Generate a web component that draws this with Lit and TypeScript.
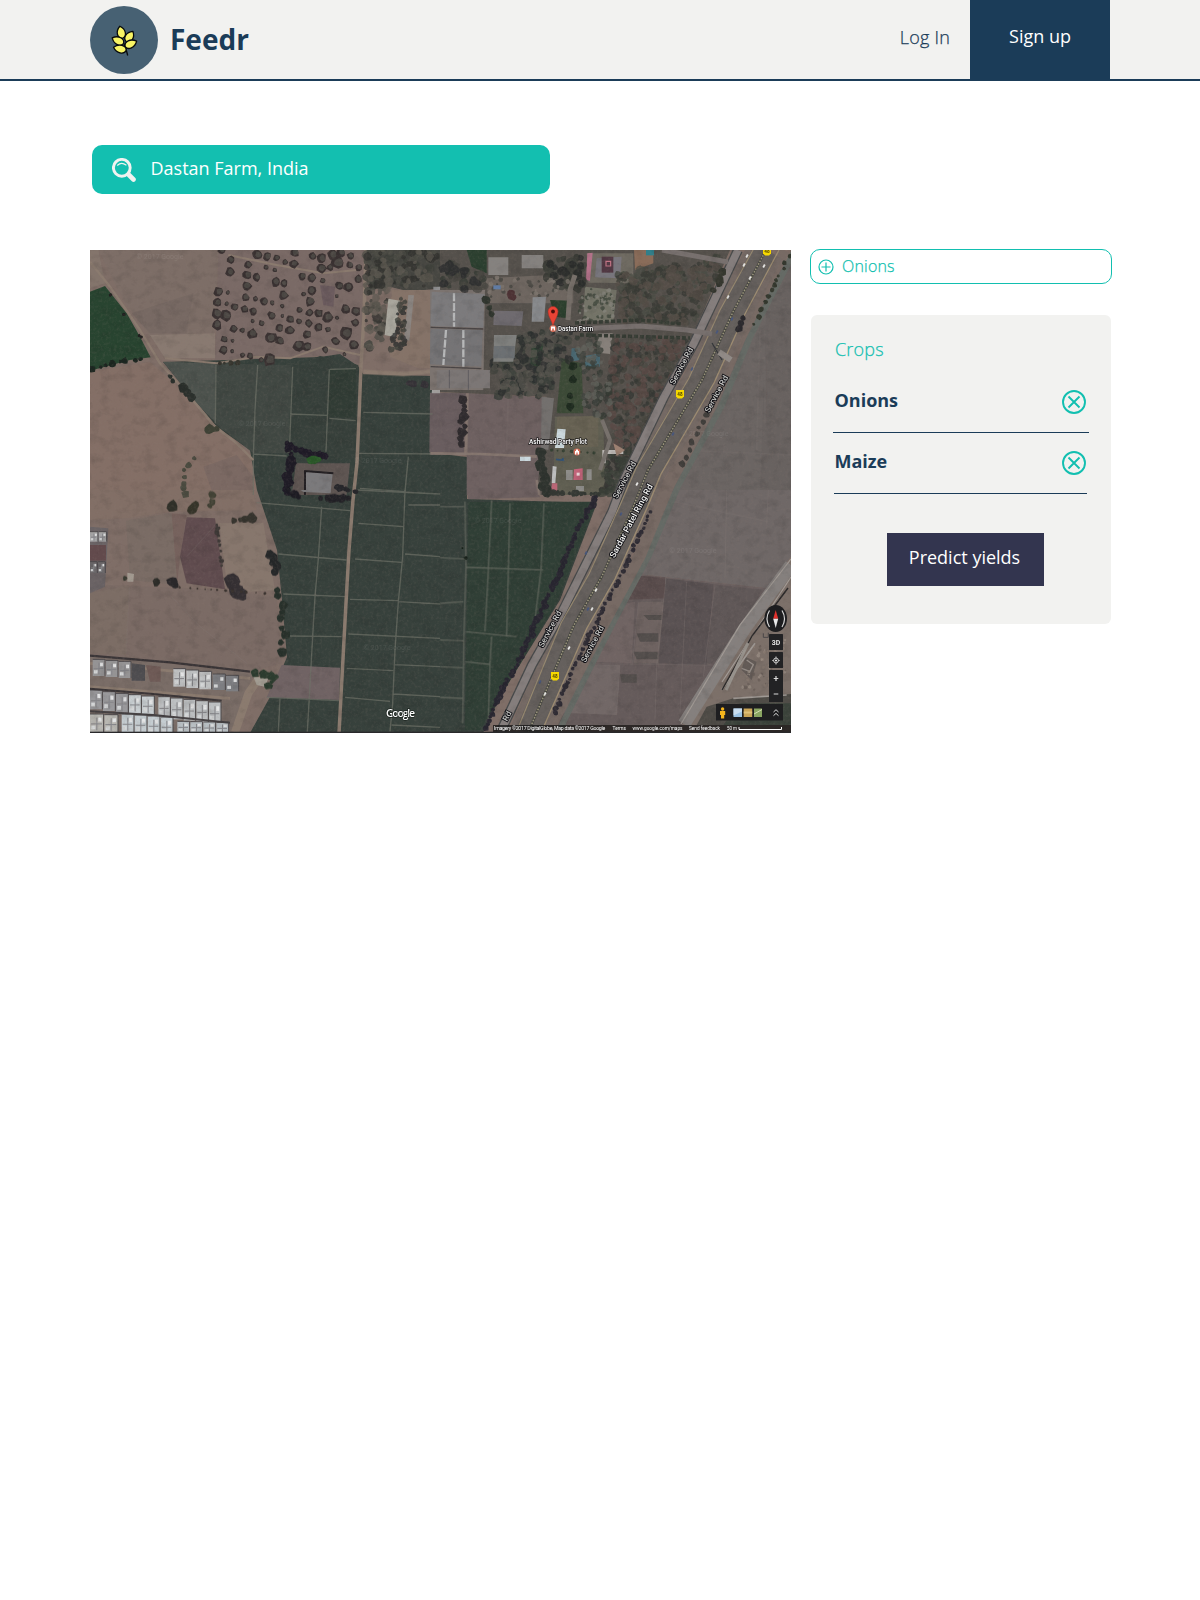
import { LitElement, html, css, svg } from "lit";
import { customElement, property, state } from "lit/decorators.js";

type Pt = [number, number];

/** Small seeded generator, so that the scattered vegetation is stable. */
function seeded(seed: number) {
  let s = seed >>> 0;
  return () => {
    s = (s + 0x6d2b79f5) >>> 0;
    let t = s;
    t = Math.imul(t ^ (t >>> 15), t | 1);
    t ^= t + Math.imul(t ^ (t >>> 7), t | 61);
    return ((t ^ (t >>> 14)) >>> 0) / 4294967296;
  };
}

function inside([x, y]: Pt, poly: Pt[]) {
  let hit = false;
  for (let i = 0, j = poly.length - 1; i < poly.length; j = i++) {
    const [xi, yi] = poly[i];
    const [xj, yj] = poly[j];
    if (yi > y !== yj > y && x < ((xj - xi) * (y - yi)) / (yj - yi) + xi) hit = !hit;
  }
  return hit;
}

/** An irregular round blob: one tree crown. */
function blob(x: number, y: number, r: number, rnd: () => number) {
  const n = 9;
  let d = "";
  for (let i = 0; i < n; i++) {
    const a = (i / n) * Math.PI * 2;
    const k = r * (0.78 + rnd() * 0.4);
    d += `${i ? "L" : "M"}${(x + Math.cos(a) * k).toFixed(1)} ${(y + Math.sin(a) * k).toFixed(1)}`;
  }
  return d + "Z";
}

function wood(poly: Pt[], count: number, rMin: number, rMax: number, colors: string[], seed: number) {
  const rnd = seeded(seed);
  const xs = poly.map((p) => p[0]);
  const ys = poly.map((p) => p[1]);
  const x0 = Math.min(...xs), x1 = Math.max(...xs);
  const y0 = Math.min(...ys), y1 = Math.max(...ys);
  const out = colors.map(() => "");
  let placed = 0;
  let guard = 0;
  while (placed < count && guard++ < count * 12) {
    const p: Pt = [x0 + rnd() * (x1 - x0), y0 + rnd() * (y1 - y0)];
    if (!inside(p, poly)) continue;
    out[Math.floor(rnd() * colors.length)] += blob(p[0], p[1], rMin + rnd() * (rMax - rMin), rnd);
    placed++;
  }
  return out.map((d, i) => svg`<path d=${d} fill=${colors[i]} opacity="0.75"/>`);
}

function treeLine(line: Pt[], step: number, r: number, color: string, seed: number) {
  const rnd = seeded(seed);
  let d = "";
  for (let i = 1; i < line.length; i++) {
    const [ax, ay] = line[i - 1];
    const [bx, by] = line[i];
    const len = Math.hypot(bx - ax, by - ay);
    for (let t = 0; t < len; t += step * (0.7 + rnd() * 0.7)) {
      const k = t / len;
      d += blob(ax + (bx - ax) * k + (rnd() - 0.5) * r, ay + (by - ay) * k, r * (0.55 + rnd() * 0.65), rnd);
    }
  }
  return svg`<path d=${d} fill=${color}/>`;
}

const orchard: [number, number, number][] = [
  [395, 0, 12], [422, 30, 12], [420, 66, 14], [475, 44, 12], [502, 15, 15], [531, 20, 13], [560, 24, 10], [472, 75, 14],
  [501, 82, 12], [528, 52, 8], [555, 60, 7], [585, 36, 9], [612, 42, 13], [614, 8, 14], [470, 108, 15], [466, 142, 12],
  [385, 125, 15], [382, 158, 13], [380, 192, 17], [407, 198, 18], [380, 225, 16], [434, 172, 12], [463, 177, 12], [490, 184, 12],
  [496, 146, 8], [523, 155, 13], [546, 158, 8], [557, 96, 14], [581, 100, 12], [580, 137, 15], [576, 168, 7], [637, 79, 12],
  [665, 83, 15], [694, 56, 15], [695, 25, 15], [668, 19, 12], [727, 15, 16], [753, 8, 14], [781, 18, 11], [780, 45, 11], [806, 52, 11],
  [698, 92, 9], [664, 122, 14], [641, 132, 8], [660, 155, 15], [658, 188, 12], [686, 190, 13], [714, 202, 16], [655, 220, 12],
  [686, 232, 12], [714, 238, 9], [627, 214, 9], [601, 208, 12], [599, 241, 14], [568, 235, 12], [545, 197, 13], [515, 220, 10],
  [487, 251, 15], [457, 241, 8], [431, 236, 12], [402, 268, 11], [428, 272, 6], [400, 300, 13], [542, 264, 18], [570, 273, 13],
  [625, 286, 17], [652, 253, 13], [651, 291, 14], [706, 300, 10], [736, 274, 13], [769, 250, 20], [790, 285, 15], [795, 218, 12],
  [767, 176, 14], [797, 184, 14], [748, 108, 13], [774, 112, 14], [804, 87, 13], [480, 318, 10], [458, 315, 8], [427, 304, 6],
  [538, 330, 19], [513, 330, 8], [763, 313, 6], [741, 204, 6], [488, 213, 6], [410, 161, 7], [413, 128, 7], [577, 198, 6],
  [742, 38, 20], [720, 52, 10], [740, 138, 6], [628, 180, 9],
];

const orchardPaths = (() => {
  const rnd = seeded(11);
  let lo = "";
  let hi = "";
  for (const [x, y, r] of orchard) {
    lo += blob(x, y, r, rnd);
    hi += blob(x + r * 0.15, y - r * 0.1, r * 0.62, rnd);
  }
  return svg`<path d=${lo} fill="#3a3232"/><path d=${hi} fill="#4d4945"/>`;
})();

function house(x: number, y: number, w: number, h: number, tone: string) {
  return svg`<g>
    <rect x=${x} y=${y} width=${w} height=${h} fill=${tone}/>
    <path d=${`M${x} ${y}h${w}M${x + w} ${y}v${h}`} stroke="#4b484a" stroke-width="3"/>
    <path d=${`M${x + 3} ${y + h * 0.55}h${w - 8}M${x + w * 0.5} ${y + h * 0.2}v${h * 0.7}`} stroke="#86868a" stroke-width="3"/>
    <rect x=${x + w * 0.6} y=${y + h * 0.2} width=${w * 0.25} height=${h * 0.22} fill="#e4e5e6"/>
    <rect x=${x + w * 0.1} y=${y + h * 0.65} width=${w * 0.3} height=${h * 0.2} fill="#d4d6d7"/>
  </g>`;
}

const A = "translate(90 250) scale(.33333)";
const B = "translate(440 250) scale(.33333)";
const C = "translate(90 490) scale(.33333)";
const D = "translate(440 490) scale(.33333)";

@customElement("farm-map")
export class FarmMap extends LitElement {
  static styles = css`
    :host { display: block; width: 701px; height: 483px; }
    .map { display: block; width: 701px; height: 483px; }
    .road-label, .place, .brand, .legal, .control {
      font-family: Roboto, "Open Sans", sans-serif;
      fill: #fff;
    }
    .road-label { font-size: 8px; text-anchor: middle; fill: #c6c6c3; stroke: #111116; stroke-width: 1.8px; paint-order: stroke; font-weight: 500; }
    .ring { fill: #f4f4f2; font-size: 8.5px; }
    .place { font-size: 6.6px; font-weight: 500; stroke: #1d1c1c; stroke-width: 1.3px; paint-order: stroke; }
    .brand { font-size: 10.5px; font-weight: 600; stroke: #1c241f; stroke-width: 1.5px; paint-order: stroke; font-family: "Open Sans", sans-serif; }
    .legal { font-size: 5.6px; }
    .tight { letter-spacing: -0.3px; }
    .control { font-size: 7px; font-weight: 700; text-anchor: middle; fill: #e6e6e6; }
    .mark { font-family: Roboto, sans-serif; font-size: 7px; text-anchor: middle; fill: #fff; opacity: 0.08; }
    .shield { font-family: Roboto, sans-serif; font-size: 4.6px; text-anchor: middle; fill: #4b3f00; font-weight: 700; }
  `;

  private land() {
    return svg`
      <rect x="90" y="250" width="701" height="483" fill="#7f6e67"/>
      <g transform=${A}>
        <path d="M25 0H385L370 320L230 325L100 150Z" fill="#7d6e67"/>
        <path d="M125 190L310 130L290 250L180 250Z" fill="#776963"/>
        <path d="M0 0L25 0L45 100L0 115Z" fill="#84756c"/>
        <path d="M180 255L375 250V325L225 325Z" fill="#897a71"/>
        <path d="M0 125L45 108L110 190L150 260L182 322L120 330L0 362Z" fill="#284430"/>
        <path d="M0 365L180 336L310 450L490 620L500 735H0Z" fill="#846f66"/>
        <path d="M385 0H822L812 345L690 318L375 330Z" fill="#7a6a66"/>
        <path d="M690 105L735 110L730 170L700 165Z" fill="#6b5b5e"/>
        <path d="M340 650L440 615L490 680V735H370Z" fill="#7b6963"/>
      </g>
      <polygon fill="#37413c" points="163,362 320,357 340,354 358,366 363,374 433,376 433,453 467,457 467,499 597,503 560,600 500,697 483,733 250,733 270,697 287,657 282,600 277,550 257,490 250,450 217,427"/>
      <g transform=${A}>
        <path d="M220 335L378 340L375 515L310 450Z" fill="#4d534e"/>
        <path d="M378 340L605 345L600 610L490 610L375 520Z" fill="#414843"/>
        <path d="M605 350L690 318L805 345L800 630L595 610Z" fill="#37403b"/>
        <path d="M720 358H797V505L715 500Z" fill="#313c35"/>
      </g>
      <g transform=${B}>
        <path d="M-30 428L78 430L72 610L-32 606Z" fill="#695d5f"/>
        <path d="M87 430L318 442L300 735H80V430Z" fill="#6e6161"/>
        <path d="M60 0H870L700 390L560 690L500 735H290L320 440L-20 425V0Z" fill="#55514c"/>
        <path d="M1053 30L990 100L900 280L700 700V735H1053Z" fill="#6b6563"/>
        <path d="M1020 60L1053 50V735H960L980 150Z" fill="#686260"/>
      </g>
      <g transform=${D}>
        <path d="M80 -5L290 -5L300 22L85 28Z" fill="#6d6060"/>
        <path d="M85 35H470L350 340L180 620L120 720H75Z" fill="#303f36"/>
        <path d="M680 0H1053V200L980 295L570 250Z" fill="#6f6867"/>
        <path d="M570 250L980 295L730 705H340L480 400Z" fill="#655b5b"/>
        <path d="M560 255L675 262V325L540 330Z" fill="#5a4d4d"/>
        <path d="M490 350L585 335L575 520L440 515Z" fill="#706463"/>
        <path d="M595 335H670V430L655 520H582Z" fill="#6e6361"/>
        <path d="M610 375H665V390H625ZM590 430H655V455H600ZM580 485H655V508H590ZM540 553H590V578H545Z" fill="#534e4c"/>
        <path d="M678 265L820 282L800 525L655 520Z" fill="#5a5253"/>
        <path d="M823 285L965 300L860 500L800 525Z" fill="#605858"/>
        <path d="M430 522L540 525L530 675L360 668Z" fill="#726867"/>
        <path d="M1053 200V640H880L800 705H725Z" fill="#7c7069"/>
        <path d="M800 650L880 625L1053 612V705H770Z" fill="#4f4c47"/>
        <path d="M900 640H1053V705H850Z" fill="#3b433b"/>
      </g>
      <g transform=${C}>
        <path d="M0 0H490L500 60L240 65L110 85L0 90Z" fill="#826f66"/>
        <path d="M108 92L245 68L262 285L120 270Z" fill="#7a6c65"/>
        <path d="M245 70L290 75L270 200L262 280Z" fill="#76625d"/>
        <path d="M290 82L375 85L405 298L290 280L270 200Z" fill="#604c4f"/>
        <path d="M388 100L520 98L555 300L470 305L412 295Z" fill="#87776d"/>
        <path d="M55 285L380 298L560 320L575 520L485 545L0 495V310Z" fill="#7b6b65"/>
        <path d="M0 310L118 285L108 495L0 490Z" fill="#7c6d65"/>
        <path d="M0 495L490 550L430 729H0Z" fill="#7a6d67"/>
        <path d="M575 525L750 533L748 630L530 622Z" fill="#706364"/>
        <path d="M0 110L55 115L45 290L0 310Z" fill="#6a6365"/>
      </g>`;
  }

  private fieldLines() {
    return svg`
      <g fill="none" stroke="#6f7268" stroke-width="4" opacity="0.7">
        <path transform=${A} d="M378 345L376 520M503 345L495 480L490 620V735M608 350L598 610M718 358L708 605M600 492L712 496M720 358L798 356M718 505L797 512M490 612L590 618M820 487L1028 492M805 610L1050 612M955 620L945 725M810 715L945 725"/>
        <path transform=${C} d="M695 50L685 205L675 320L668 440L658 620L652 725M500 38L780 62M565 192L770 210M580 312L768 320M600 438L755 440M570 625L565 725M530 622L748 632M945 0L938 200L925 335L915 480L908 640L900 725M805 100L940 110M795 207L935 217M780 328L925 332M775 432L1050 445M770 535L910 542M765 622L900 634M955 45H1050M945 192L1050 200M925 335L1050 342M915 524L1050 530M910 612L1050 620M905 705L1050 712M800 0L1050 12"/>
        <path transform=${D} d="M75 35L78 230L72 430L68 700M155 30L145 240L135 425M210 40L205 240L200 440M312 40L303 240L285 390M80 232L310 240M78 425L230 440M155 440L150 520L145 700M75 515L150 523M0 50H72M0 203L72 207M0 340L70 335M0 450L70 452M0 530L68 533M0 622L68 625"/>
      </g>
      <g fill="none" stroke="#8a7f7b" stroke-width="2" opacity="0.4">
        <path transform=${B} d="M960 245L950 600M710 600L1053 615M205 435L200 600M975 320V520"/>
        <path transform=${D} d="M860 0L855 265M985 0L980 100M680 30L985 95M678 265L650 525M740 275L720 670M825 285L790 560M560 250L980 297M430 520L860 525M595 335L578 520M540 525L530 675M650 525L645 690"/>
        <path transform=${C} d="M235 310L330 410L470 520M118 290L108 490M380 100L290 200"/>
      </g>
      <g fill="none" stroke="#8b7b6f" stroke-linejoin="round">
        <path stroke-width="3.500" d="M366 250L364 317L361 365L359 417L357 463L353 500L349 550L346 603L342 677L339 733"/>
        <path transform=${A} stroke-width="7" d="M0 35L60 110L150 240L210 340L300 440L370 525L440 580L490 630"/>
        <path transform=${A} stroke-width="6" d="M225 325L380 340L500 320L600 325L700 290L810 315M415 15L560 45L700 70L800 60"/>
        <path transform=${A} stroke-width="13" d="M820 365L940 372L1050 362"/>
        <path transform=${B} stroke-width="8" stroke="#867770" d="M-30 610L120 612L290 620M290 690L298 735M82 430L78 610"/>
        <path transform=${C} stroke-width="24" d="M435 727L475 610L510 560"/>
        <path transform=${C} stroke-width="8" d="M0 520L480 565M0 590L420 625"/>
      </g>`;
  }

  private buildings() {
    const row = (x: number, y: number, n: number, w: number, h: number, tone: string, dy = 0) =>
      Array.from({ length: n }, (_, i) => house(x + i * w, y + i * dy, w - 2, h, tone));
    return svg`
      <g transform=${A}>
        <path d="M830 0H1050V115L960 125L900 110L840 120Z" fill="#474742"/>
        <path d="M905 120H1050V355H985L900 320Z" fill="#857368"/>
        <path d="M1030 110H1050V360H1022Z" fill="#8f8f90"/>
        <path d="M618 640L780 640L770 735H605Z" fill="#5e5552"/>
        <path d="M648 665L728 672L722 725H645Z" fill="#7b7a7c"/>
        <path d="M645 735V663L730 670" fill="none" stroke="#221f22" stroke-width="6"/>
        <path d="M1030 380H1050V430H1025Z" fill="#a2a09e"/>
      </g>
      <g transform=${C}>
        <path d="M632 0H722V10L640 6Z" fill="#7b7a7c"/>
      </g>
      <g transform=${B}>
        <path d="M-30 120H135L130 420H-30Z" fill="#7c7470"/>
        <path d="M-25 125L134 132L130 233L-28 228Z" fill="#7c7b7d"/>
        <path d="M-28 236L128 240L124 350L-30 343Z" fill="#757476"/>
        <path d="M-28 232L130 237M-28 350L124 356" stroke="#4a4545" stroke-width="4"/>
        <path d="M-10 360H150V415H-10Z" fill="#7c7776"/>
        <path d="M42 130V230M70 240V350M18 240L10 345" stroke="#b7b8b9" stroke-width="7" stroke-dasharray="24 5"/>
        <path d="M85 360V420M28 360V415" stroke="#5e5c5f" stroke-width="3"/>
        <path d="M80 0H140V70L95 50Z" fill="#2c4030"/>
        <path d="M145 22H205V75H145Z M245 15H310V55H245Z" fill="#85827f"/>
        <path d="M135 85L330 75L400 115V160H150Z" fill="#6e6660"/>
        <path d="M162 182L250 184L245 228L160 225Z" fill="#6f6b70"/>
        <path d="M330 150L392 152L385 205L345 200Z" fill="#2b3f2d"/>
        <path d="M275 290L310 280L300 350L270 345Z" fill="#2c4231"/>
        <path d="M440 10H580V100L445 98Z" fill="#6f6b62"/>
        <path d="M442 10L458 8L450 92L438 90Z" fill="#b4728a"/>
        <path d="M470 25L545 20L540 85L465 82Z" fill="#78767d"/>
        <path d="M485 20H520V68H485Z" fill="#513843"/>
        <path d="M498 34H512V48H498Z" fill="none" stroke="#c47586" stroke-width="3.500"/>
        <path d="M582 0H640V40L585 60Z" fill="#8a6c59"/>
        <path d="M618 0H642V16H618Z" fill="#307f8b"/>
        <path d="M435 110L530 120L520 215L430 210Z" fill="#747468"/>
        <path d="M475 250H518L510 312L470 308Z" fill="#87817b"/>
        <path d="M435 318L480 310V350H435ZM395 295H420V330L392 335Z" fill="#4b6a74"/>
        <path d="M365 325L425 340L430 490L350 490Z" fill="#3c4a37"/>
        <path d="M305 440L342 445L325 600L303 595Z" fill="#73706e"/>
        <path d="M345 500H490L495 735H340Z" fill="#605f52"/>
        <path d="M352 500L475 498V590L345 595Z" fill="#686354"/>
        <path d="M352 536L377 538L372 594H345Z" fill="#ccd9dd"/>
        <path d="M240 620H272V633H240Z" fill="#cbd9df"/>
        <path d="M338 648L350 650L346 700H335Z" fill="#bfc0c0"/>
        <path d="M336 700H352V728H332Z" fill="#ba6676"/>
        <path d="M378 660H398V690H378ZM440 658H455V690H440ZM408 708H432V724H408Z" fill="#8f8e8b"/>
        <path d="M402 658L428 655V690H400Z" fill="#c4637a"/>
        <rect x="410" y="668" width="9" height="9" fill="#efd9dd"/>
        <path d="M348 628L370 631L368 624" stroke="#33577d" stroke-width="5" fill="none"/>
      </g>
      <g transform=${C}>
        ${row(0, 125, 2, 26, 30, "#a6a6a7")}
        ${row(0, 215, 2, 24, 34, "#6a6769")}
        <path d="M0 165H48V212H0Z" fill="#624a4c"/>
        ${row(8, 508, 3, 39, 50, "#959495", 3)}
        <path d="M125 520L165 525V572H125Z" fill="#4e4d50"/>
        <path d="M168 525L212 530V575H180Z" fill="#6e5a56"/>
        ${row(250, 536, 3, 39, 54, "#bfc1c2", 4)}
        ${row(368, 552, 2, 40, 48, "#7d7e82", 4)}
        ${row(0, 600, 3, 39, 58, "#99999c", 5)}
        ${row(117, 614, 2, 39, 56, "#c8ced1", 4)}
        ${row(205, 620, 5, 38, 64, "#bdc0c2", 4)}
        ${row(0, 672, 2, 43, 54, "#b8b7b2", 2)}
        ${row(95, 672, 4, 39, 56, "#c5cdd1", 3)}
        ${row(262, 694, 4, 39, 33, "#b8bfc3", 1)}
        <path d="M0 497L240 517L480 545" stroke="#3a3537" stroke-width="7" fill="none"/>
        <path d="M0 596L190 612L395 632" stroke="#3a3537" stroke-width="6" fill="none"/>
        <path d="M0 664L190 675L420 698" stroke="#454143" stroke-width="6" fill="none"/>
        <path d="M112 248L132 252L130 275H112Z" fill="#a29a90"/>
        <path d="M490 560L535 565L525 590L500 585Z" fill="#a39d93"/>
      </g>
      <g transform=${D}>
        <path d="M915 500L950 515L935 570L905 540Z" fill="#625a56"/>
        <path d="M920 510l20 14l-12 24M905 535l26 10" stroke="#958d87" stroke-width="4" fill="none"/>
        <path d="M845 600L945 460M880 625L1040 615M1010 560V630" stroke="#a09a95" stroke-width="5" fill="none"/>
        <path d="M970 430V442H985V428" stroke="#4a4648" stroke-width="3" fill="none"/>
        ${wood([[940, 470], [1040, 440], [1040, 600], [890, 600]], 60, 2, 6, ["#8b7c73", "#665b56", "#9a8d84"], 70)}
      </g>`;
  }

  private woods() {
    return svg`
      <g transform=${A}>${orchardPaths}
        ${wood([[830, 0], [1050, 0], [1010, 110], [900, 110], [885, 260], [835, 300], [820, 180]], 190, 5, 15, ["#3c3f39", "#4e4e47", "#30302e", "#5d5a52"], 3)}
        <path d="M895 146L930 152L915 262L884 255Z" fill="#a9a79e"/>
        <path d="M955 135L972 136L958 272L942 268Z" fill="#8c8682"/>
        ${wood([[925, 150], [948, 130], [945, 290], [895, 310], [912, 240]], 40, 5, 10, ["#26282a", "#3b3e38"], 4)}
        ${treeLine([[5, 358], [90, 335], [175, 325]], 22, 10, "#1c2620", 5)}
        ${treeLine([[240, 380], [295, 430], [325, 455]], 20, 13, "#2b302c", 6)}
        ${treeLine([[598, 580], [600, 640], [592, 735]], 11, 14, "#1f1c26", 7)}
        ${treeLine([[600, 590], [650, 610], [715, 620]], 12, 12, "#1f1b27", 8)}
        ${treeLine([[665, 630], [695, 628]], 8, 11, "#2b5a29", 9)}
        ${treeLine([[355, 538], [390, 536]], 15, 13, "#3f4236", 10)}
        ${treeLine([[315, 625], [285, 660], [285, 735]], 20, 11, "#4b4b40", 12)}
        ${treeLine([[390, 340], [450, 338]], 15, 8, "#37362f", 14)}
        ${treeLine([[745, 710], [795, 725]], 14, 12, "#27272b", 15)}
        ${treeLine([[955, 400], [1010, 405]], 25, 14, "#353237", 16)}
        ${treeLine([[60, 135], [155, 262], [195, 305]], 80, 8, "#1f1f1e", 17)}
      </g>
      <g transform=${B}>
        ${wood([[0, 20], [70, 60], [140, 70], [135, 120], [10, 115]], 50, 8, 15, ["#353b34", "#474640", "#292b2c"], 20)}
        ${wood([[310, 50], [420, 0], [440, 100], [400, 130], [330, 100]], 55, 8, 16, ["#32342f", "#3d403a", "#282a2a"], 21)}
        ${wood([[530, 75], [650, 50], [850, 20], [830, 80], [760, 220], [540, 215]], 330, 5, 14, ["#40443b", "#4a4c44", "#383934", "#564e47"], 22)}
        ${wood([[520, 265], [750, 262], [700, 380], [610, 590], [540, 640], [500, 470]], 400, 5, 13, ["#40403a", "#4b4a43", "#353834", "#5b4a46"], 23)}
        ${wood([[155, 330], [240, 250], [390, 240], [390, 330], [345, 370], [330, 440], [170, 440]], 250, 5, 14, ["#343b35", "#43463f", "#2b2e2e", "#55544e"], 24)}
        ${wood([[395, 255], [470, 250], [515, 400], [510, 500], [430, 495], [420, 350]], 90, 5, 12, ["#333a33", "#434741", "#62635c"], 25)}
        ${wood([[140, 80], [400, 90], [400, 130], [150, 150]], 40, 3, 8, ["#44443f", "#817a72"], 26)}
        ${wood([[425, 115], [525, 120], [520, 210], [405, 215]], 70, 3, 7, ["#3c443a", "#85847c"], 27)}
        <path d="M160 106H182V118H160Z" fill="#607ca6"/>
        <path d="M278 142L318 140L312 215H275Z" fill="#898b8e"/>
        <path d="M162 255H230L220 335H160Z" fill="#7f807e"/>
        <path d="M162 288H224V325H160Z" fill="#6c7073"/>
        ${treeLine([[68, 450], [68, 585]], 14, 14, "#302c2f", 28)}
        ${treeLine([[300, 600], [315, 730]], 10, 15, "#2f342f", 29)}
        ${treeLine([[395, 350], [390, 480]], 38, 12, "#1f2c20", 30)}
        ${wood([[500, 610], [580, 600], [520, 735], [480, 735]], 60, 5, 14, ["#30312f", "#3b413a"], 31)}
        <path d="M487 600H550V612H497V640H487Z" fill="#bcb8b5"/>
        <path d="M520 580L555 600L530 618Z" fill="#9d8071"/>
        ${treeLine([[335, 600], [480, 610]], 22, 5, "#354133", 34)}
        ${treeLine([[340, 728], [480, 733]], 12, 9, "#353934", 37)}
        ${treeLine([[145, 150], [150, 210]], 18, 15, "#30362f", 35)}
        ${treeLine([[210, 130], [225, 145]], 10, 10, "#4c3234", 36)}
      </g>
      <g transform=${C}>
        ${treeLine([[245, 48], [246, 52]], 12, 17, "#303029", 40)}
        ${treeLine([[310, 45], [310, 65]], 13, 14, "#353429", 41)}
        ${treeLine([[365, 15], [362, 60]], 16, 14, "#434336", 42)}
        ${treeLine([[425, 92], [490, 82]], 17, 14, "#36342e", 43)}
        ${treeLine([[378, 105], [398, 240]], 15, 7, "#3e3937", 44)}
        ${treeLine([[435, 275], [455, 325]], 9, 21, "#353033", 45)}
        ${treeLine([[545, 195], [560, 245]], 13, 13, "#262829", 46)}
        ${treeLine([[560, 300], [575, 345], [575, 385], [583, 435], [574, 490]], 24, 16, "#28312b", 47)}
        ${treeLine([[195, 277], [196, 282]], 9, 14, "#2c2c28", 48)}
        ${treeLine([[248, 275], [254, 285]], 9, 17, "#2a282a", 49)}
        ${treeLine([[105, 265], [112, 266]], 9, 12, "#383a31", 50)}
        ${treeLine([[600, 0], [625, 25]], 9, 14, "#1d1c23", 51)}
        ${treeLine([[695, 25], [775, 25]], 13, 14, "#222126", 52)}
        ${treeLine([[500, 550], [555, 560], [530, 600]], 12, 12, "#2c3c2f", 53)}
        ${treeLine([[270, 292], [410, 302], [550, 312]], 22, 4, "#3a332f", 54)}
      </g>`;
  }

  private highway() {
    const west = "M738 250L694 343L664 397L624 480L612 512L562 612L532 665L500 733";
    const mid = "M766 250L733 312L702 380L648 470L634 505L602 576L574 625L528 733";
    const east = "M795 250L750 337L722 405L678 486L649 555L616 617L589 670L558 733";
    return svg`
      <g fill="none" stroke-linejoin="round">
        <path d=${east} stroke="#656a65" stroke-width="6"/>
        <path d="M784 250L740 337L711 405L668 486L640 555L607 617L579 670L547 733" stroke="#776a64" stroke-width="12"/>
        <path d=${mid} stroke="#746964" stroke-width="37"/>
        <path d=${mid} stroke="#65605d" stroke-width="25"/>
        <path d=${west} stroke="#484a4b" stroke-width="10"/>
        <path d=${west} stroke="#857e7d" stroke-width="7.500"/>
        <path d="M779 250L745 314L714 383L661 474L647 508L615 579L587 628L541 733" stroke="#9d8c72" stroke-width="1.400"/>
        <path d="M753 250L720 310L689 378L636 468L621 503L589 574L561 623L516 733" stroke="#968870" stroke-width="1.200"/>
        <path d=${mid} stroke="#474742" stroke-width="2.600"/>
        <path d=${mid} stroke="#9d977e" stroke-width="1.500" stroke-dasharray="1.500 1.500"/>
        <path d="M555 330L640 326L687 330L712 334M662 250L728 262" stroke="#77706e" stroke-width="5"/>
        <path d="M575 323L640 320L682 324M580 335L690 338" stroke="#363c34" stroke-width="3.500" stroke-dasharray="4 2"/>
        <path d="M568 320L570 290L575 275" stroke="#77706a" stroke-width="5"/>
        <path d="M602 420L610 440L600 470" stroke="#77716c" stroke-width="4"/>
        <path d="M712 343L722 360" stroke="#35373b" stroke-width="1.200"/>
        <path d="M719 352L731 360" stroke="#918b87" stroke-width="6"/>
        <path d="M791 565L745 628L684 724" stroke="#85807e" stroke-width="13"/>
        <path d="M791 559L740 625L681 724M791 577L722 682" stroke="#a39c97" stroke-width="1.200"/>
        <path d="M788 588L752 636L722 690" stroke="#2c2a2a" stroke-width="1.500"/>
        <path d="M748 643L726 690" stroke="#99948e" stroke-width="3"/>
      </g>
      <g fill="#eeeeec">
        ${[[728, 297], [744, 265], [750, 278], [747, 256], [596, 590], [592, 609], [569, 648], [545, 694], [637, 484], [764, 266]].map(
          ([x, y]) => svg`<rect x=${x - 0.9} y=${y - 1.7} width="1.800" height="3.400" transform=${`rotate(28 ${x} ${y})`}/>`
        )}
      </g>
      <g fill="#46567c">
        ${[[732, 319], [717, 332], [692, 369], [673, 434], [621, 514], [588, 609], [586, 553], [540, 682]].map(
          ([x, y]) => svg`<rect x=${x - 0.9} y=${y - 1.7} width="1.800" height="3.400" transform=${`rotate(28 ${x} ${y})`}/>`
        )}
      </g>
      ${treeLine([[744, 318], [738, 334]], 5, 4, "#2c2a2e", 60)}
      ${treeLine([[706, 415], [682, 465]], 7, 3.2, "#403e3b", 61)}
      ${treeLine([[650, 512], [625, 566], [600, 615], [575, 665], [554, 715]], 5, 2.8, "#2f2c34", 62)}
      ${treeLine([[597, 497], [580, 525], [555, 583], [537, 620], [520, 660], [504, 688], [484, 732]], 4, 3.3, "#282630", 63)}
      ${treeLine([[789, 256], [772, 290], [752, 330]], 6, 2.6, "#35392f", 64)}
      ${treeLine([[715, 290], [724, 268]], 5, 4, "#35372f", 65)}
      ${treeLine([[463, 548], [466, 564]], 14, 2, "#17211a", 66)}`;
  }

  private shield(x: number, y: number) {
    return svg`<path d=${`M${x - 4} ${y - 4}H${x + 4}V${y + 2.4}L${x + 2} ${y + 4.4}H${x - 2}L${x - 4} ${y + 2.4}Z`} fill="#f6d800"/>
      <text class="shield" x=${x} y=${y + 1.8}>48</text>`;
  }

  private labels() {
    const road = (text: string, x: number, y: number, a: number, len: number, extra = "") =>
      svg`<text class=${`road-label ${extra}`} transform=${`translate(${x} ${y}) rotate(${a})`} y="2.6" textLength=${len} lengthAdjust="spacingAndGlyphs">${text}</text>`;
    const mark = (x: number, y: number) => svg`<text class="mark" x=${x} y=${y}>© 2017 Google</text>`;
    return svg`
      ${mark(387, 650)}${mark(262, 426)}${mark(693, 553)}${mark(705, 436)}${mark(160, 259)}${mark(378, 463)}${mark(498, 523)}
      ${road("Service Rd", 681.5, 366, -62, 41)}
      ${road("Service Rd", 716.5, 394, -62, 41)}
      ${road("Service Rd", 624.5, 480, -62, 41)}
      ${road("Service Rd", 550, 629, -62, 40)}
      ${road("Service Rd", 592.5, 644, -62, 40)}
      ${road("Rd", 507, 716, -62, 10)}
      ${road("Sardar Patel Ring Rd", 631.5, 521, -62, 82, "ring")}
      ${this.shield(680, 394)}${this.shield(555, 676)}${this.shield(767, 251)}
      <path d="M553 327C552 320 548 317 548 311.500A5 5 0 0 1 558 311.500C558 317 554 320 553 327Z" fill="#ea4335" stroke="#a52f25" stroke-width=".5"/>
      <circle cx="553" cy="311.500" r="1.900" fill="#4c0f0b"/>
      <circle cx="553" cy="328.500" r="3.400" fill="#cf6a55"/>
      <path d="M551 330.500V326.500H555V330.500H553.800V328.500H552.200V330.500Z" fill="#fff"/>
      <text class="place" x="558" y="330.600" textLength="35" lengthAdjust="spacingAndGlyphs">Dastan Farm</text>
      <text class="place" x="529" y="444" textLength="58" lengthAdjust="spacingAndGlyphs">Ashirwad Party Plot</text>
      <circle cx="577" cy="452" r="3.400" fill="#cf6a55"/>
      <path d="M575 454.500V451H576V449.500H578V451H579V454.500H577.600V452.500H576.400V454.500Z" fill="#fff"/>
      <text class="brand" x="386" y="717.300" textLength="29" lengthAdjust="spacing">Google</text>`;
  }

  private controls() {
    return svg`
      <rect x="493" y="725" width="298" height="7" fill="#121212" opacity=".75"/>
      <rect x="90" y="731.700" width="701" height="1.300" fill="#29292b"/>
      <text class="legal tight" x="494" y="730.300" textLength="111" lengthAdjust="spacingAndGlyphs">Imagery ©2017 DigitalGlobe, Map data ©2017 Google</text>
      <text class="legal" x="612.500" y="730.300" textLength="13.500" lengthAdjust="spacingAndGlyphs">Terms</text>
      <text class="legal" x="632.500" y="730.300" textLength="50" lengthAdjust="spacingAndGlyphs">www.google.com/maps</text>
      <text class="legal" x="689" y="730.300" textLength="31" lengthAdjust="spacingAndGlyphs">Send feedback</text>
      <text class="legal" x="727" y="730.300" textLength="10" lengthAdjust="spacingAndGlyphs">50 m</text>
      <path d="M739 727V729.500H781.500V727" stroke="#fff" fill="none"/>
      <ellipse cx="775.700" cy="618.500" rx="11.300" ry="13.500" fill="#1d1d1f"/>
      <path d="M769.500 610.500Q764.500 618.500 769.500 627M782 610.500Q787 618.500 782 627" stroke="#d6d6d6" stroke-width="1.200" fill="none"/>
      <path d="M775.700 610L778.200 618.700H773.200Z" fill="#e0312d"/>
      <path d="M775.700 628L778.200 618.700H773.200Z" fill="#e8e8e8"/>
      <rect x="769" y="634" width="14" height="16" rx=".6" fill="#222224"/>
      <text class="control" x="776" y="645" textLength="8.500" lengthAdjust="spacingAndGlyphs">3D</text>
      <rect x="769" y="652" width="14" height="16" rx=".6" fill="#222224"/>
      <circle cx="776" cy="660.500" r="2.400" fill="none" stroke="#cfcfcf"/>
      <circle cx="776" cy="660.500" r="1" fill="#fff"/>
      <path d="M776 656.500v1.500M776 663v1.500M772.300 660.500h1.300M778.400 660.500h1.300" stroke="#cfcfcf"/>
      <rect x="769" y="670" width="14" height="32" rx=".6" fill="#222224"/>
      <path d="M773.700 678.500H778.300M776 676V681M773.700 694H778.300" stroke="#d9d9d9" stroke-width="1.200"/>
      <rect x="716" y="704" width="67" height="16.500" fill="#1e1e20"/>
      <circle cx="722.600" cy="709" r="1.700" fill="#f3b51d"/>
      <path d="M720 711H725.200V715H724.200V718.500H721V715H720Z" fill="#f3b51d"/>
      <path d="M733.500 708.500h8.500v8.500h-8.500Z" fill="#9cc3e4"/>
      <path d="M733.500 708.500h8.500v3l-8.500 4Z" fill="#c9def0"/>
      <path d="M743.700 708.500h8.500v8.500h-8.500Z" fill="#c9a457"/>
      <path d="M743.700 711.500h8.500v2h-8.500Z" fill="#dfc07a"/>
      <path d="M754 708.500h8v8.500h-8Z" fill="#8aa562"/>
      <path d="M754 714L762 709.500" stroke="#d7dfb4"/>
      <path d="M773.500 712L776 709.700L778.500 712M773.500 715.700L776 713.400L778.500 715.700" stroke="#d9d9d9" fill="none"/>`;
  }

  render() {
    return html`
      <svg class="map" viewBox="90 250 701 483" role="img" aria-label="Dastan Farm">
        <defs>
          <filter id="grain" x="0" y="0" width="100%" height="100%" color-interpolation-filters="sRGB">
            <feTurbulence type="fractalNoise" baseFrequency="0.35" numOctaves="3" seed="4"/>
            <feColorMatrix values="0 0 0 0 .56  0 0 0 0 .5  0 0 0 0 .47  1.4 0 0 0 -.62"/>
          </filter>
          <filter id="shade" x="0" y="0" width="100%" height="100%" color-interpolation-filters="sRGB">
            <feTurbulence type="fractalNoise" baseFrequency="0.09 0.11" numOctaves="4" seed="9"/>
            <feColorMatrix values="0 0 0 0 .1  0 0 0 0 .1  0 0 0 0 .1  0 1.8 0 0 -.85"/>
          </filter>
          <filter id="soft" color-interpolation-filters="sRGB"><feGaussianBlur stdDeviation="0.4"/></filter>
        </defs>
        <g filter="url(#soft)">
          ${this.land()}${this.fieldLines()}${this.buildings()}${this.woods()}${this.highway()}
        </g>
        <rect x="90" y="250" width="701" height="483" filter="url(#shade)" opacity=".16"/>
        <rect x="90" y="250" width="701" height="483" filter="url(#grain)" opacity=".25"/>
        ${this.labels()}${this.controls()}
      </svg>`;
  }
}

@customElement("crop-row")
export class CropRow extends LitElement {
  @property() name = "";

  static styles = css`
    :host { display: block; }
    .row { display: flex; justify-content: space-between; height: 41px; color: #1b3c58; }
    .name { font: 700 18px/24px "Open Sans", sans-serif; margin-left: 1.500px; }
    .remove { width: 24px; height: 24px; margin: 2px 0 0; }
  `;

  render() {
    return html`<div class="row">
      <span class="name">${this.name}</span>
      <svg class="remove" viewBox="0 0 24 24" fill="none" stroke="#12bfb0" stroke-width="1.900">
        <circle cx="12" cy="12" r="11"/><path d="M6.500 6.500L17.500 17.500M17.500 6.500L6.500 17.500"/>
      </svg>
    </div>`;
  }
}

@customElement("app-root")
export class AppRoot extends LitElement {
  @state() private crops = ["Onions", "Maize"];

  static styles = css`
    :host { display: block; min-height: 1600px; background: #fff; font-family: "Open Sans", sans-serif; color: #1b3c58; }
    .header { display: flex; box-sizing: border-box; height: 81px; padding: 0 90px; background: #f2f2f0; border-bottom: 2px solid #1b3c58; }
    .logo { width: 68px; height: 68px; margin-top: 5.500px; }
    .title { margin: 20px 0 0 12px; font-weight: 700; font-size: 28px; line-height: 38px; }
    .nav { display: flex; margin-left: auto; font-size: 18px; line-height: 24px; }
    .login { padding: 25px 20px 0 0; font-weight: 300; letter-spacing: 0.2px; -webkit-text-stroke: 0.25px; }
    .signup { box-sizing: border-box; width: 140px; padding-top: 24px; text-align: center; background: #1b3c58; color: #fff; }
    .search { display: flex; box-sizing: border-box; width: 458px; height: 49px; margin: 64px 0 0 92px; padding: 11px 20px; gap: 14.500px; border-radius: 10px; background: #13bfb0; color: #fff; font-size: 18px; line-height: 24px; }
    .lens { width: 24px; height: 24px; margin-top: 2px; }
    .content { display: flex; padding: 55px 0 0 90px; align-items: flex-start; }
    .map { margin-top: 1px; }
    .side { width: 302px; margin-left: 19px; }
    .add { display: flex; box-sizing: border-box; height: 35px; padding: 5px 6.500px; gap: 8.500px; border: 1px solid #12bfb0; border-radius: 10px; color: #12bfb0; font-weight: 300; font-size: 16px; line-height: 22px; letter-spacing: 0.2px; -webkit-text-stroke: 0.25px; }
    .plus { width: 16px; height: 16px; margin-top: 3.500px; }
    .panel { box-sizing: border-box; width: 300px; height: 309px; margin: 31px 0 0 1px; padding: 22px 22px 0; border-radius: 6px; background: #f2f2f0; }
    .heading { margin: 0 0 27px 2px; color: #12bfb0; font-weight: 300; font-size: 18px; line-height: 24px; letter-spacing: 0.2px; -webkit-text-stroke: 0.25px; }
    .item { padding: 0 3px 3px 0; border-bottom: 1px solid #1b3c58; }
    .item + .item { margin: 16px 2px 0 1px; padding-right: 1px; }
    .item + .item .crop { margin-left: -1px; }
    .crop { display: block; }
    .predict { display: block; width: 157px; height: 53px; margin: 39px 0 0 54px; padding: 0 2px 5px 0; border: 0; background: #33354f; color: #fff; font: 400 18px/24px "Open Sans", sans-serif; }
  `;

  private logo() {
    const grain = (x: number, y: number, a: number, rx: number, ry: number) =>
      svg`<path transform=${`translate(${x} ${y}) rotate(${a})`} d=${`M0 ${-ry - 1.5}C${rx * 1.4} ${-ry * 0.5} ${rx * 1.3} ${ry * 0.8} 0 ${ry}C${-rx * 1.3} ${ry * 0.8} ${-rx * 1.4} ${-ry * 0.5} 0 ${-ry - 1.5}Z`}/>`;
    return html`<svg class="logo" viewBox="90 5 68 68">
      <circle cx="124" cy="39" r="34" fill="#476173"/>
      <path d="M119.500 25.500Q121 38 124.500 44Q126.500 49 127.700 54.500" fill="none" stroke="#090b0c" stroke-width="1.300"/>
      <g fill="#f8f465" stroke="#090b0c" stroke-width="1.300" stroke-linejoin="round">
        ${grain(121.3, 32, -12, 4, 5.4)}
        ${grain(129.2, 36.2, 32, 3.9, 5.4)}
        ${grain(118.6, 40, -64, 3.8, 5.6)}
        ${grain(130.2, 43.2, 65, 3.8, 5.6)}
        ${grain(120.6, 48, -76, 3.8, 5.8)}
      </g>
    </svg>`;
  }

  render() {
    return html`
      <header class="header">
        ${this.logo()}
        <div class="title">Feedr</div>
        <nav class="nav">
          <span class="login">Log In</span>
          <span class="signup">Sign up</span>
        </nav>
      </header>
      <div class="search">
        <svg class="lens" viewBox="0 0 24 24" fill="none" stroke="#f1f2f0" stroke-linecap="round">
          <circle cx="9.800" cy="9.800" r="8.400" stroke-width="2.900"/>
          <path d="M5.500 7.200Q9.500 3.600 14 7" stroke-width="1.200"/>
          <path d="M16.500 16.500L21.500 21.500" stroke-width="4.600"/>
        </svg>
        <span>Dastan Farm, India</span>
      </div>
      <main class="content">
        <farm-map class="map"></farm-map>
        <aside class="side">
          <div class="add">
            <svg class="plus" viewBox="0 0 16 16" fill="none" stroke="#12bfb0" stroke-width="1.200">
              <circle cx="8" cy="8" r="7"/><path d="M8 3.500V12.500M3.500 8H12.500"/>
            </svg>
            <span>Onions</span>
          </div>
          <section class="panel">
            <h2 class="heading">Crops</h2>
            ${this.crops.map((c) => html`<div class="item"><crop-row class="crop" .name=${c}></crop-row></div>`)}
            <button class="predict">Predict yields</button>
          </section>
        </aside>
      </main>`;
  }
}
